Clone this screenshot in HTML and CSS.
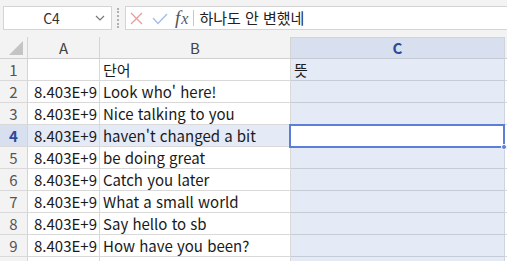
FILE: index.html
```html
<!DOCTYPE html>
<html lang="ko">
<head>
<meta charset="utf-8">
<link rel="stylesheet" href="styles.css">
</head>
<body>
<div class="app">
  <div class="topbar">
    <div class="namebox">
      <span class="ref">C4</span>
      <svg class="chev" width="10" height="6" viewBox="0 0 10 6"><path d="M1 1 L5 5 L9 1" fill="none" stroke="#777" stroke-width="1.2"/></svg>
    </div>
    <div class="grip"></div>
    <div class="formula">
      <svg class="ico x-ico" width="13" height="13" viewBox="0 0 13 13"><path d="M1 1 L12 12 M12 1 L1 12" stroke="#e89c9c" stroke-width="1.3" fill="none"/></svg>
      <svg class="ico ok-ico" width="16" height="12" viewBox="0 0 16 12"><path d="M1 5 L6 10.5 L15 1" stroke="#a0bcef" stroke-width="1.3" fill="none"/></svg>
      <span class="fx"><i>f</i><i class="x">x</i></span>
      <span class="sep"></span>
      <span class="ftext">하나도 안 변했네</span>
    </div>
  </div>
  <div class="grid">
    <div class="corner"><span class="tri"></span></div>
    <div class="ch">A</div>
    <div class="ch">B</div>
    <div class="ch sel">C</div>
    <div class="ch rest"></div>

    <div class="rh">1</div><div class="c"></div><div class="c">단어</div><div class="c csel">뜻</div><div class="c rest"></div>
    <div class="rh">2</div><div class="c num">8.403E+9</div><div class="c">Look who' here!</div><div class="c csel"></div><div class="c rest"></div>
    <div class="rh">3</div><div class="c num">8.403E+9</div><div class="c">Nice talking to you</div><div class="c csel"></div><div class="c rest"></div>
    <div class="rh rsel">4</div><div class="c num hl">8.403E+9</div><div class="c hl">haven't changed a bit</div><div class="c active"><span class="handle"></span></div><div class="c rest"></div>
    <div class="rh">5</div><div class="c num">8.403E+9</div><div class="c">be doing great</div><div class="c csel"></div><div class="c rest"></div>
    <div class="rh">6</div><div class="c num">8.403E+9</div><div class="c">Catch you later</div><div class="c csel"></div><div class="c rest"></div>
    <div class="rh">7</div><div class="c num">8.403E+9</div><div class="c">What a small world</div><div class="c csel"></div><div class="c rest"></div>
    <div class="rh">8</div><div class="c num">8.403E+9</div><div class="c">Say hello to sb</div><div class="c csel"></div><div class="c rest"></div>
    <div class="rh">9</div><div class="c num">8.403E+9</div><div class="c">How have you been?</div><div class="c csel"></div><div class="c rest"></div>
  </div>
  <div class="grid last">
    <div class="rh">10</div><div class="c"></div><div class="c"></div><div class="c csel"></div><div class="c rest"></div>
  </div>
</div>
</body>
</html>
```
FILE: styles.css
```css
* { box-sizing: border-box; }
html, body { margin: 0; padding: 0; }
body {
  width: 507px; height: 261px; overflow: hidden;
  background: #fff;
  font-family: "Noto Sans CJK KR", "Noto Sans", sans-serif;
  color: #222;
}
.app { width: 507px; height: 261px; overflow: hidden; }
.topbar {
  background: #f3f3f3;
  height: 37px;
  padding: 6px 0 0 3px;
  display: flex;
  align-items: flex-start;
}
.namebox {
  width: 109px; height: 24px;
  background: #fff;
  border: 1px solid #d4d4d4;
  display: flex; align-items: center;
}
.ref {
  flex: 1; text-align: center;
  font-size: 14px; color: #333; padding-left: 4px;
  line-height: 22px;
}
.chev { margin-right: 6px; }
.grip {
  width: 1px; height: 20px; margin: 2px 6px 0 5px;
  border-left: 2px dotted #b0b0b0;
}
.formula {
  flex: 1; height: 24px;
  background: #fff;
  border: 1px solid #d4d4d4; border-right: none;
  display: flex; align-items: center;
  padding-left: 4px;
}
.x-ico { margin-right: 9px; }
.ok-ico { margin-right: 7px; margin-top: 2px; }
.fx {
  font-family: "Liberation Serif", serif;
  font-size: 19px; color: #555;
  line-height: 20px;
}
.fx i { font-style: italic; }
.fx .x { font-size: 16px; margin-left: 1px; }
.sep { width: 1px; height: 16px; background: #c8c8c8; margin: 0 5px 0 5px; }
.ftext { font-size: 15px; color: #222; line-height: 22px; }

.grid {
  display: grid;
  grid-template-columns: 28px 72px 191px 214px 2px;
  grid-auto-rows: 22px;
}
.corner, .ch {
  background: #f3f3f3;
  border-bottom: 1px solid #d0d0d0;
  border-right: 1px solid #d4d4d4;
}
.corner { position: relative; }
.tri {
  position: absolute; left: 9px; top: 4px;
  width: 0; height: 0;
  border-left: 14px solid transparent;
  border-bottom: 14px solid #c4c4c4;
}
.ch {
  text-align: center; font-size: 15px; color: #444; line-height: 21px;
}
.ch.sel {
  background: #d8dfee; color: #2c4a9a; font-weight: bold;
  border-top: 1px solid #cdd3df;
  border-bottom: 1px solid #c4cad6; border-right: 1px solid #cfd3db;
  line-height: 20px;
}
.ch.rest { border-right: none; background: #f3f3f3; }
.c.rest { border-right: none; background: #fff; }
.rh {
  background: #f3f3f3;
  border-right: 1px solid #d4d4d4;
  border-bottom: 1px solid #d9d9d9;
  text-align: center; font-size: 15px; color: #555; line-height: 21px;
}
.rh.rsel { background: #d8dfee; color: #2c4a9a; font-weight: bold; }
.c {
  border-right: 1px solid #d9d9d9;
  border-bottom: 1px solid #d9d9d9;
  font-size: 15px; line-height: 21px;
  padding-left: 3px;
  white-space: nowrap; overflow: hidden;
  color: #1a1a1a;
}
.c.num { text-align: right; padding-right: 2px; padding-left: 0; }
.c.hl { background: #e4eaf6; }
.c.csel {
  background: #e4eaf6;
  border-bottom: 1px solid #c6cbd6;
  border-right: 1px solid #cfd3db;
}
.c.active {
  background: #fff;
  border: 2px solid #5b7fd6;
  margin: -1px 0 -1px -2px;
  position: relative;
  overflow: visible;
}
.handle {
  position: absolute; right: -4px; bottom: -4px;
  width: 6px; height: 6px; border-radius: 50%;
  background: #5b7fd6; border: 1px solid #fff;
}
.grid.last { height: 5px; overflow: hidden; }
.grid.last .rh { color: #555; }
```
